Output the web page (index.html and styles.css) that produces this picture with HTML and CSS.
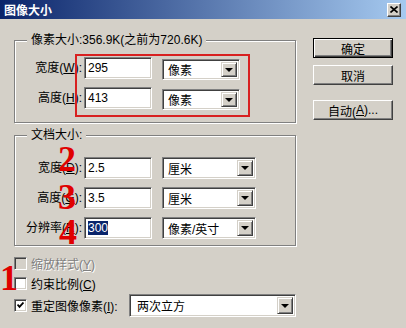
FILE: index.html
```html
<!DOCTYPE html>
<html lang="zh-CN">
<head>
  <meta charset="UTF-8" />
  <title>图像大小</title>
  <link rel="stylesheet" href="styles.css">
</head>
<body>

<div class="window">
  <div class="titlebar">
    <span class="title">图像大小</span>
    <span class="close">
      <svg width="8" height="7" viewBox="0 0 8 7"><path d="M0.5 0.5 L7.5 6.5 M7.5 0.5 L0.5 6.5" stroke="#000" stroke-width="1.6" fill="none"/></svg>
    </span>
  </div>

  <div class="content">
    <div class="main">
      <fieldset class="group group-pixel">
        <legend>像素大小:356.9K(之前为720.6K)</legend>
        <div class="row">
          <span class="label">宽度(<u>W</u>):</span>
          <span class="field">295</span>
          <span class="dropdown short"><span class="value">像素</span><span class="arrow"></span></span>
        </div>
        <div class="row">
          <span class="label">高度(<u>H</u>):</span>
          <span class="field">413</span>
          <span class="dropdown short"><span class="value">像素</span><span class="arrow"></span></span>
        </div>
      </fieldset>

      <fieldset class="group group-doc">
        <legend>文档大小:</legend>
        <div class="row">
          <span class="label">宽度(<u>D</u>):</span>
          <span class="field">2.5</span>
          <span class="dropdown"><span class="value">厘米</span><span class="arrow"></span></span>
        </div>
        <div class="row">
          <span class="label">高度(<u>G</u>):</span>
          <span class="field">3.5</span>
          <span class="dropdown"><span class="value">厘米</span><span class="arrow"></span></span>
        </div>
        <div class="row">
          <span class="label">分辨率(<u>R</u>):</span>
          <span class="field"><span class="selected">300</span></span>
          <span class="dropdown"><span class="value">像素/英寸</span><span class="arrow"></span></span>
        </div>
      </fieldset>

      <div class="checks">
        <div class="check-row disabled">
          <span class="checkbox"></span>
          <span>缩放样式(<u>Y</u>)</span>
        </div>
        <div class="check-row">
          <span class="checkbox"></span>
          <span>约束比例(<u>C</u>)</span>
        </div>
        <div class="check-row resample">
          <span class="checkbox">
            <svg width="7" height="7" viewBox="0 0 7 7"><path d="M0.5 2.5 L2.5 4.8 L6.5 0.5" stroke="#000" stroke-width="1.8" fill="none"/></svg>
          </span>
          <span>重定图像像素(<u>I</u>):</span>
          <span class="dropdown wide"><span class="value">两次立方</span><span class="arrow"></span></span>
        </div>
      </div>
    </div>

    <div class="side">
      <span class="btn btn-default">确定</span>
      <span class="btn btn-cancel">取消</span>
      <span class="btn btn-auto">自动(<u>A</u>)...</span>
    </div>
  </div>

  <!-- annotations drawn over the dialog -->
  <div class="mark-box"></div>
  <span class="num num-1">1</span>
  <span class="num num-2">2</span>
  <span class="num num-3">3</span>
  <span class="num num-4">4</span>
</div>

</body>
</html>
```

FILE: styles.css
```css
* {
  box-sizing: border-box;
}

body {
  margin: 0;
  background: #d4d0c8;
  font-family: "Liberation Sans", "Noto Sans CJK SC", sans-serif;
  font-size: 12px;
  color: #000;
}

.window {
  position: relative;
  width: 406px;
  height: 328px;
  overflow: hidden;
  background: #d4d0c8;
}

.titlebar {
  height: 19px;
  display: flex;
  align-items: center;
  justify-content: space-between;
  padding: 0 5px 0 4px;
  background: linear-gradient(to right, #0a246a, #a6caf0);
  color: #fff;
  font-weight: bold;
}

.close {
  width: 14px;
  height: 14px;
  display: flex;
  align-items: center;
  justify-content: center;
  background: #d4d0c8;
  border: 1px solid;
  border-color: #fff #404040 #404040 #fff;
  box-shadow: inset -1px -1px #808080;
}

.content {
  display: flex;
  padding: 14px 0 0 14px;
}

.main {
  width: 282px;
}

.side {
  width: 80px;
  margin-left: 17px;
  padding-top: 5px;
  display: flex;
  flex-direction: column;
}

/* group boxes */
.group {
  margin: 0;
  padding: 10px 0 13px 0;
  min-width: 0;
  border: 1px solid #808080;
  box-shadow: inset 1px 1px #fff, 1px 1px #fff;
}

.group legend {
  margin-left: 12px;
  padding: 0 4px 0 4px;
  line-height: 14px;
  background: #d4d0c8;
}

.group-doc {
  margin-top: 5px;
  padding: 15px 0 6px 0;
}

.row {
  display: flex;
  align-items: flex-start;
  height: 22px;
}

.row + .row {
  margin-top: 8px;
}

.label {
  width: 67px;
  margin-right: 2px;
  line-height: 22px;
  text-align: right;
  white-space: nowrap;
}

.field {
  width: 68px;
  height: 22px;
  padding-left: 3px;
  line-height: 20px;
  background: #fff;
  border: 1px solid;
  border-color: #808080 #fff #fff #808080;
  box-shadow: inset 1px 1px #404040, inset -1px -1px #d4d0c8;
}

.selected {
  background: #0a246a;
  color: #fff;
}

.dropdown {
  width: 94px;
  height: 22px;
  margin-left: 10px;
  display: flex;
  align-items: center;
  justify-content: space-between;
  padding: 2px;
  background: #fff;
  border: 1px solid;
  border-color: #808080 #fff #fff #808080;
  box-shadow: inset 1px 1px #404040, inset -1px -1px #d4d0c8;
}

.dropdown.short {
  width: 78px;
  height: 21px;
  margin-top: 2px;
}

.dropdown .value {
  padding-left: 3px;
  white-space: nowrap;
}

.arrow {
  position: relative;
  width: 16px;
  height: 100%;
  background: #d4d0c8;
  border: 1px solid;
  border-color: #d4d0c8 #404040 #404040 #d4d0c8;
  box-shadow: inset 1px 1px #fff, inset -1px -1px #808080;
}

.arrow::after {
  content: "";
  position: absolute;
  left: 3px;
  top: 50%;
  margin-top: -2px;
  border-left: 4px solid transparent;
  border-right: 4px solid transparent;
  border-top: 4px solid #000;
}

/* checkboxes */
.checks {
  margin-top: 7px;
}

.check-row {
  display: flex;
  align-items: center;
  height: 20px;
  white-space: nowrap;
}

.check-row.resample {
  height: 23px;
  margin-top: 1px;
}

.checkbox {
  width: 13px;
  height: 13px;
  margin-right: 4px;
  display: flex;
  align-items: center;
  justify-content: center;
  background: #fff;
  border: 1px solid;
  border-color: #808080 #fff #fff #808080;
  box-shadow: inset 1px 1px #404040, inset -1px -1px #d4d0c8;
}

.check-row.disabled {
  color: #808080;
  text-shadow: 1px 1px #fff;
}

.check-row.disabled .checkbox {
  background: #d4d0c8;
}

.dropdown.wide {
  width: 167px;
  height: 23px;
  margin-left: auto;
}

.dropdown.wide .value {
  padding-left: 5px;
}

/* buttons */
.btn {
  height: 20px;
  display: flex;
  align-items: center;
  justify-content: center;
  background: #d4d0c8;
  border: 1px solid;
  border-color: #fff #404040 #404040 #fff;
  box-shadow: inset -1px -1px #808080;
}

.btn-default {
  border-color: #000;
  box-shadow: inset 1px 1px #fff, inset -1px -1px #404040, inset -2px -2px #808080;
}

.btn-cancel {
  margin-top: 7px;
}

.btn-auto {
  margin-top: 15px;
}

/* red annotations */
.mark-box {
  position: absolute;
  left: 75px;
  top: 54px;
  width: 175px;
  height: 63px;
  border: 2px solid #d82020;
}

.num {
  position: absolute;
  font-family: "Liberation Serif", serif;
  font-weight: bold;
  font-size: 36px;
  line-height: 1;
  color: #e00000;
}

.num-1 {
  left: 0;
  top: 260px;
}

.num-2 {
  left: 58px;
  top: 141px;
}

.num-3 {
  left: 58px;
  top: 179px;
}

.num-4 {
  left: 59px;
  top: 214px;
}
```
